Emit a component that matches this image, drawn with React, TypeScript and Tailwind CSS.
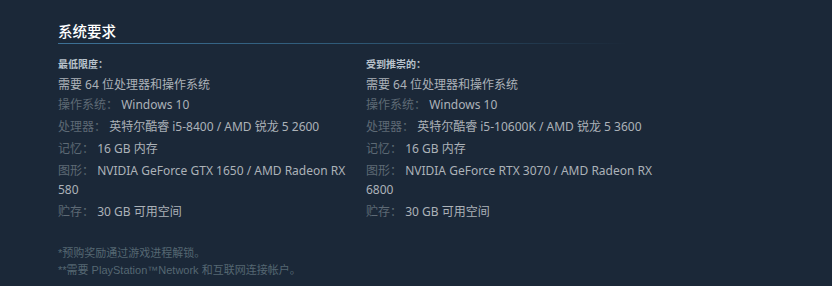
const font = "font-['Noto_Sans','Noto_Sans_CJK_SC',sans-serif]";

type Req = { label?: string; value: string };

const minimum: Req[] = [
  { value: "需要 64 位处理器和操作系统" },
  { label: "操作系统：", value: "Windows 10" },
  { label: "处理器：", value: "英特尔酷睿 i5-8400 / AMD 锐龙 5 2600" },
  { label: "记忆：", value: "16 GB 内存" },
  { label: "图形：", value: "NVIDIA GeForce GTX 1650 / AMD Radeon RX 580" },
  { label: "贮存：", value: "30 GB 可用空间" },
];

const recommended: Req[] = [
  { value: "需要 64 位处理器和操作系统" },
  { label: "操作系统：", value: "Windows 10" },
  { label: "处理器：", value: "英特尔酷睿 i5-10600K / AMD 锐龙 5 3600" },
  { label: "记忆：", value: "16 GB 内存" },
  { label: "图形：", value: "NVIDIA GeForce RTX 3070 / AMD Radeon RX 6800" },
  { label: "贮存：", value: "30 GB 可用空间" },
];

function Column({ title, items }: { title: string; items: Req[] }) {
  return (
    <div className="w-[308px]">
      <div className="w-[300px]">
        <div className="mt-[13px] text-[10px] leading-[14px] font-bold text-[#b9c3cc]">{title}</div>
        <ul className="mt-[4px]">
          {items.map((it, i) => (
            <li key={i} className={`text-[12px] leading-[19px] text-[#acb2b8] ${i === 0 ? "mb-px" : "mb-[3px]"}`}>
              {it.label && <span className="text-[#5e6a75]">{it.label} </span>}
              {it.value}
            </li>
          ))}
        </ul>
      </div>
    </div>
  );
}

export default function App() {
  return (
    <div className={`w-full h-[286px] bg-[#1b2838] pl-[58px] pt-[21px] ${font}`}>
      <h2 className="text-[14.5px] leading-[20px] font-medium text-white">系统要求</h2>
      <div className="mt-[2px] h-px w-[570px] bg-gradient-to-r from-[#3d7196] via-[#2f5a78] to-transparent" />
      <div className="flex">
        <Column title="最低限度：" items={minimum} />
        <Column title="受到推崇的：" items={recommended} />
      </div>
      <div className="mt-[21px] text-[11px] leading-[17px] text-[#556772] font-['Liberation_Sans','Noto_Sans_CJK_SC',sans-serif]">
        <p>*预购奖励通过游戏进程解锁。</p>
        <p>**需要 PlayStation™Network 和互联网连接帐户。</p>
      </div>
    </div>
  );
}
